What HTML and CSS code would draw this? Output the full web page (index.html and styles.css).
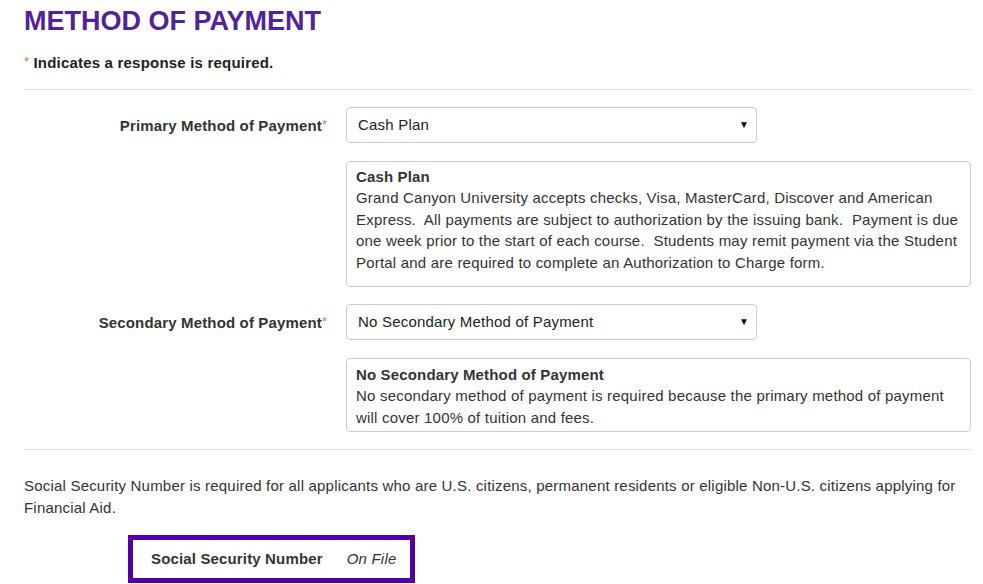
FILE: index.html
```html
<!DOCTYPE html>
<html>
<head>
<meta charset="utf-8">
<link rel="stylesheet" href="styles.css">
</head>
<body>
<div class="page">
  <h1 class="title">METHOD OF PAYMENT</h1>
  <p class="required-note"><span class="req">*</span> Indicates a response is required.</p>
  <hr class="divider">

  <div class="form-row">
    <div class="label-col"><span class="label">Primary Method of Payment</span><span class="req">*</span></div>
    <div class="field-col">
      <div class="select"><span>Cash Plan</span><span class="arrow">▼</span></div>
      <div class="desc desc-tall">
        <div class="desc-title">Cash Plan</div>
        <div>Grand Canyon University accepts checks, Visa, MasterCard, Discover and American Express.&nbsp; All payments are subject to authorization by the issuing bank.&nbsp; Payment is due one week prior to the start of each course.&nbsp; Students may remit payment via the Student Portal and are required to complete an Authorization to Charge form.</div>
      </div>
    </div>
  </div>

  <div class="form-row">
    <div class="label-col"><span class="label">Secondary Method of Payment</span><span class="req">*</span></div>
    <div class="field-col">
      <div class="select"><span>No Secondary Method of Payment</span><span class="arrow">▼</span></div>
      <div class="desc desc-short">
        <div class="desc-title">No Secondary Method of Payment</div>
        <div>No secondary method of payment is required because the primary method of payment will cover 100% of tuition and fees.</div>
      </div>
    </div>
  </div>

  <hr class="divider divider-lower">

  <p class="ssn-note">Social Security Number is required for all applicants who are U.S. citizens, permanent residents or eligible Non-U.S. citizens applying for Financial Aid.</p>

  <div class="ssn-box">
    <span class="ssn-label">Social Security Number</span>
    <span class="ssn-value">On File</span>
  </div>
</div>
</body>
</html>
```
FILE: styles.css
```css
* { box-sizing: border-box; }
html, body { margin: 0; padding: 0; background: #fff; }
body {
  font-family: "Liberation Sans", Arial, sans-serif;
  color: #333;
  font-size: 15px;
  line-height: 21.4px;
  letter-spacing: 0.2px;
}
.page {
  width: 947px;
  margin-left: 24px;
  padding-top: 4px;
}
.title {
  margin: 0;
  font-size: 27px;
  line-height: 34px;
  font-weight: bold;
  color: #522398;
  letter-spacing: 0;
}
.required-note {
  margin: 14px 0 0;
  font-size: 15px;
  font-weight: bold;
  line-height: 20px;
  color: #222;
  letter-spacing: 0.2px;
}
.req { color: #e8743b; font-weight: normal; font-size: 13px; vertical-align: 2px; margin-right: 1px; letter-spacing: 0; }
.required-note .req { margin-right: 0; }
.divider {
  border: 0;
  border-top: 1px solid #e2e2e6;
  margin: 16px 0 17px;
  height: 0;
}
.form-row {
  display: flex;
  margin-bottom: 17px;
}
.label-col {
  width: 304px;
  text-align: right;
  padding-top: 7px;
  margin-right: 18px;
  white-space: nowrap;
}
.label {
  font-size: 15px;
  font-weight: bold;
  color: #333;
  letter-spacing: 0.15px;
}
.field-col {
  flex: 1;
  display: flex;
  flex-direction: column;
  gap: 18px;
}
.select {
  width: 411px;
  height: 36px;
  border: 1px solid #ccc;
  border-radius: 4px;
  display: flex;
  align-items: center;
  justify-content: space-between;
  padding: 0 7px 0 11px;
  color: #222;
  font-size: 15px;
}
.arrow { font-size: 10px; color: #111; }
.desc {
  border: 1px solid #ccc;
  border-radius: 4px;
  padding: 4px 9px 4px;
  color: #333;
}
.desc-tall { padding-bottom: 13px; }
.desc-short { padding-top: 5px; padding-bottom: 3px; }
.desc-title { font-weight: bold; letter-spacing: 0.15px; }
.divider-lower { margin-top: 3px; margin-bottom: 25px; }
.ssn-note {
  margin: 0 0 17px;
}
.ssn-box {
  display: inline-flex;
  align-items: center;
  margin-left: 104px;
  height: 48px;
  border: 5px solid #5200a6;
  padding: 0 14px 0 18px;
  gap: 24px;
}
.ssn-label {
  font-size: 15px;
  font-weight: bold;
  letter-spacing: 0.15px;
}
.ssn-value {
  font-style: italic;
  font-size: 15px;
}
```
